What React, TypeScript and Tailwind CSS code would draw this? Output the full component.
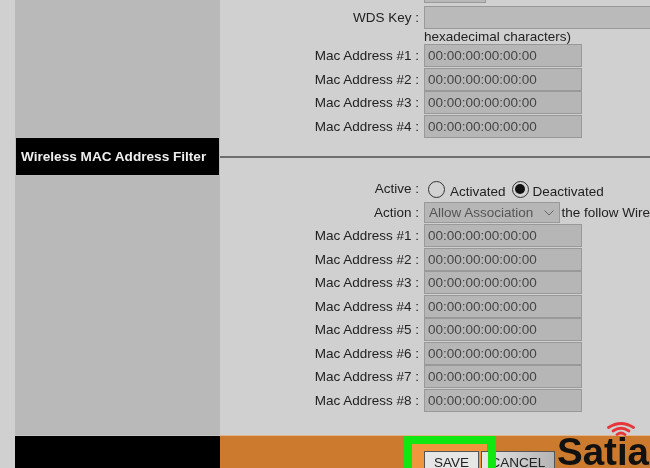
const FONT = "font-['Liberation_Sans',Arial,sans-serif]";

function MacRow({ n }: { n: number }) {
  return (
    <FieldRow label={`Mac Address #${n} :`}>
      <div className="flex h-[23px] w-[158px] items-center border border-[#999999] bg-[#b6b6b6] pl-[3px] text-[#454545]">
        00:00:00:00:00:00
      </div>
    </FieldRow>
  );
}

function FieldRow({ label, children }: { label: string; children: React.ReactNode }) {
  return (
    <div className="flex h-[23.5px] items-center">
      <div className="w-[199px] shrink-0 whitespace-nowrap text-right text-[#222222]">{label}</div>
      <div className="ml-[5px] flex items-center whitespace-nowrap">{children}</div>
    </div>
  );
}

function Radio({ checked }: { checked?: boolean }) {
  return (
    <span className="flex h-[17px] w-[17px] shrink-0 items-center justify-center rounded-full border border-[#333333] bg-[#d2d2d2]">
      {checked && <span className="h-[10px] w-[10px] rounded-full bg-[#111111]" />}
    </span>
  );
}

function WifiMark() {
  return (
    <svg width="28" height="14" viewBox="0 0 28 14" fill="none" stroke="#e8353a" strokeLinecap="round" strokeWidth="2.8">
      <path d="M1.5 5.5 Q14 -2.5 26.5 5.5" />
      <path d="M6 9 Q14 3.5 22 9" />
      <path d="M10 12.5 Q14 9.5 18 12.5" />
    </svg>
  );
}

export default function App() {
  return (
    <div className={`${FONT} h-[468px] w-[650px] overflow-hidden bg-[#d0d0d0] text-[13.5px] leading-none blur-[0.3px]`}>
      {/* top section, scrolled so only the end shows */}
      <div className="flex h-[137px]">
        <div className="ml-[15px] w-[205px] shrink-0 bg-[#b9b9b9]" />
        <div className="min-w-0 flex-1">
          <div className="ml-[204px] h-[3px] w-[62px] border-x border-b border-[#999999] bg-[#b9b9b9]" />
          <div className="flex h-[27px] items-center pt-[2px]">
            <div className="w-[199px] shrink-0 text-right text-[#222222]">WDS Key :</div>
            <div className="ml-[5px] h-[23px] flex-1 border-y border-l border-[#999999] bg-[#bababa]" />
          </div>
          <div className="ml-[204px] flex h-[14px] items-center whitespace-nowrap text-[#222222]">hexadecimal characters)</div>
          {[1, 2, 3, 4].map((n) => (
            <MacRow key={n} n={n} />
          ))}
        </div>
      </div>

      {/* section title */}
      <div className="flex h-[39px] items-center">
        <div className="ml-[15px] flex h-[39px] w-[205px] shrink-0 items-center border border-[#bdbdbd] bg-black pl-[5px] text-[13.6px] font-bold text-[#eeeeee]">
          Wireless MAC Address Filter
        </div>
        <div className="h-[2px] flex-1 bg-[#6e6e6e]" />
      </div>

      {/* filter section */}
      <div className="flex h-[259px]">
        <div className="ml-[15px] w-[205px] shrink-0 bg-[#b9b9b9]" />
        <div className="min-w-0 flex-1 pt-[1px]">
          <div className="flex h-[24px] items-center">
            <div className="w-[199px] shrink-0 text-right text-[#222222]">Active :</div>
            <div className="ml-[9px] flex items-center whitespace-nowrap text-[#222222]">
              <Radio />
              <span className="ml-[5px] mt-[5px]">Activated</span>
              <span className="ml-[6px]"><Radio checked /></span>
              <span className="ml-[4px] mt-[5px]">Deactivated</span>
            </div>
          </div>
          <div className="flex h-[23px] items-center">
            <div className="w-[199px] shrink-0 text-right text-[#222222]">Action :</div>
            <div className="ml-[5px] flex h-[21px] w-[138px] items-center justify-between border border-[#999999] bg-[#b6b6b6] pl-[4px] pr-[5px] text-[#555555]">
              Allow Association
              <svg width="10" height="6" viewBox="0 0 10 6" fill="none" stroke="#666666">
                <path d="M0.5 0.5 L5 5 L9.5 0.5" />
              </svg>
            </div>
            <span className="ml-[1px] whitespace-nowrap text-[#222222]">the follow Wire</span>
          </div>
          {[1, 2, 3, 4, 5, 6, 7, 8].map((n) => (
            <MacRow key={n} n={n} />
          ))}
        </div>
      </div>

      {/* footer bar */}
      <div className="flex h-[33px]">
        <div className="ml-[15px] w-[205px] shrink-0 border-t border-[#c4c4c4] bg-black" />
        <div className="relative flex flex-1 border-t border-[#e0b48c] bg-[#cc7a2d]">
          <div className="relative ml-[192px] h-[33px] w-[75px] shrink-0 bg-[#f0963c]">
            <button className="absolute left-[12px] top-[15px] flex h-[24px] w-[55px] items-start justify-center border border-[#555555] bg-[#e6e6e6] pt-[4px] text-[13.5px] text-[#222222]">
              SAVE
            </button>
          </div>
          <button className="relative ml-[-6px] mt-[15px] flex h-[24px] w-[74px] shrink-0 items-start justify-center border border-[#555555] bg-linear-to-r from-[#e6e6e6] to-[#b4b4b4] pt-[4px] text-[13.5px] text-[#222222]">
            CANCEL
          </button>
          <div className="absolute left-[184px] top-0 h-[40px] w-[92px] border-8 border-[#11e811]" />
          <div className="absolute left-[337px] top-[-4px] text-[38.5px] font-bold leading-[39px] text-[#111111]">Satia</div>
          <div className="absolute left-[387px] top-[-14px]">
            <WifiMark />
          </div>
        </div>
      </div>
    </div>
  );
}
